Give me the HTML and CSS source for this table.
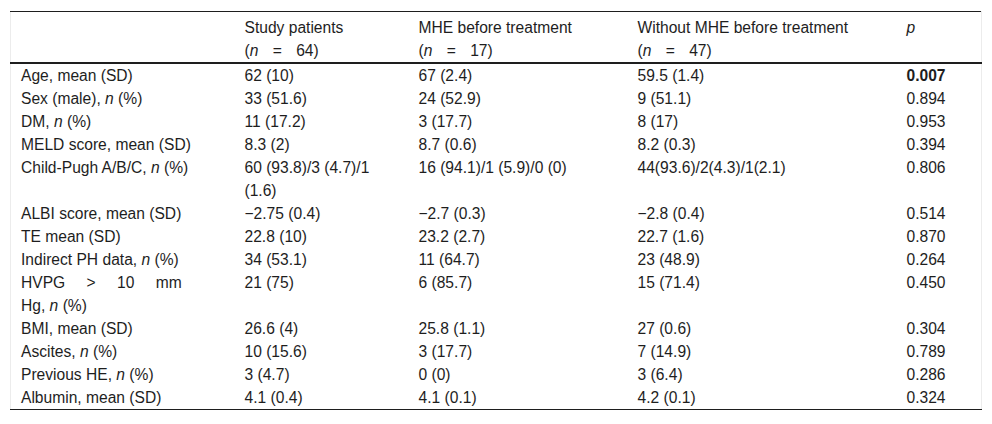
FILE: index.html
```html
<!DOCTYPE html>
<html lang="en">
<head>
<meta charset="utf-8">
<title>Table</title>
<link rel="stylesheet" href="styles.css">
</head>
<body>
<div class="wrap">
<table class="data">
  <colgroup>
    <col class="c1"><col class="c2"><col class="c3"><col class="c4"><col class="c5">
  </colgroup>
  <thead>
    <tr>
      <th></th>
      <th>Study patients<br><span class="ws">(<i>n</i> = 64)</span></th>
      <th>MHE before treatment<br><span class="ws">(<i>n</i> = 17)</span></th>
      <th>Without MHE before treatment<br><span class="ws">(<i>n</i> = 47)</span></th>
      <th><i>p</i></th>
    </tr>
  </thead>
  <tbody>
    <tr><td>Age, mean (SD)</td><td>62 (10)</td><td>67 (2.4)</td><td>59.5 (1.4)</td><td><b>0.007</b></td></tr>
    <tr><td>Sex (male), <i>n</i> (%)</td><td>33 (51.6)</td><td>24 (52.9)</td><td>9 (51.1)</td><td>0.894</td></tr>
    <tr><td>DM, <i>n</i> (%)</td><td>11 (17.2)</td><td>3 (17.7)</td><td>8 (17)</td><td>0.953</td></tr>
    <tr><td>MELD score, mean (SD)</td><td>8.3 (2)</td><td>8.7 (0.6)</td><td>8.2 (0.3)</td><td>0.394</td></tr>
    <tr><td>Child-Pugh A/B/C, <i>n</i> (%)</td><td>60 (93.8)/3 (4.7)/1 (1.6)</td><td>16 (94.1)/1 (5.9)/0 (0)</td><td>44(93.6)/2(4.3)/1(2.1)</td><td>0.806</td></tr>
    <tr><td>ALBI score, mean (SD)</td><td>−2.75 (0.4)</td><td>−2.7 (0.3)</td><td>−2.8 (0.4)</td><td>0.514</td></tr>
    <tr><td>TE mean (SD)</td><td>22.8 (10)</td><td>23.2 (2.7)</td><td>22.7 (1.6)</td><td>0.870</td></tr>
    <tr><td>Indirect PH data, <i>n</i> (%)</td><td>34 (53.1)</td><td>11 (64.7)</td><td>23 (48.9)</td><td>0.264</td></tr>
    <tr><td><span class="wide">HVPG &gt; 10 mm</span><br>Hg, <i>n</i> (%)</td><td>21 (75)</td><td>6 (85.7)</td><td>15 (71.4)</td><td>0.450</td></tr>
    <tr><td>BMI, mean (SD)</td><td>26.6 (4)</td><td>25.8 (1.1)</td><td>27 (0.6)</td><td>0.304</td></tr>
    <tr><td>Ascites, <i>n</i> (%)</td><td>10 (15.6)</td><td>3 (17.7)</td><td>7 (14.9)</td><td>0.789</td></tr>
    <tr><td>Previous HE, <i>n</i> (%)</td><td>3 (4.7)</td><td>0 (0)</td><td>3 (6.4)</td><td>0.286</td></tr>
    <tr><td>Albumin, mean (SD)</td><td>4.1 (0.4)</td><td>4.1 (0.1)</td><td>4.2 (0.1)</td><td>0.324</td></tr>
  </tbody>
</table>
</div>
</body>
</html>
```

FILE: styles.css
```css
html, body {
  margin: 0;
  padding: 0;
  background: #ffffff;
}

body {
  padding: 11px 10px 0 10px;
  font-family: "Liberation Sans", Arial, Helvetica, sans-serif;
  font-size: 15.6px;
  color: #1e1e1e;
}

.wrap {
  width: 972px;
}

.data {
  width: 972px;
  table-layout: fixed;
  border-collapse: collapse;
  border-top: 1px solid #1e1e1e;
  border-bottom: 1px solid #1e1e1e;
  border-left: 1px solid #ececec;
  border-right: 1px solid #ececec;
}

.c1 { width: 224px; }
.c2 { width: 174px; }
.c3 { width: 219px; }
.c4 { width: 269px; }
.c5 { width: 85px; }

.data th,
.data td {
  text-align: left;
  vertical-align: top;
  padding: 0 10px;
  line-height: 23px;
}

.data th {
  font-weight: normal;
  padding-top: 4px;
  padding-bottom: 0;
  border-bottom: 2px solid #1e1e1e;
}

.data td b {
  font-weight: bold;
}

.ws {
  word-spacing: 10px;
}

.wide {
  word-spacing: 17px;
}
```
